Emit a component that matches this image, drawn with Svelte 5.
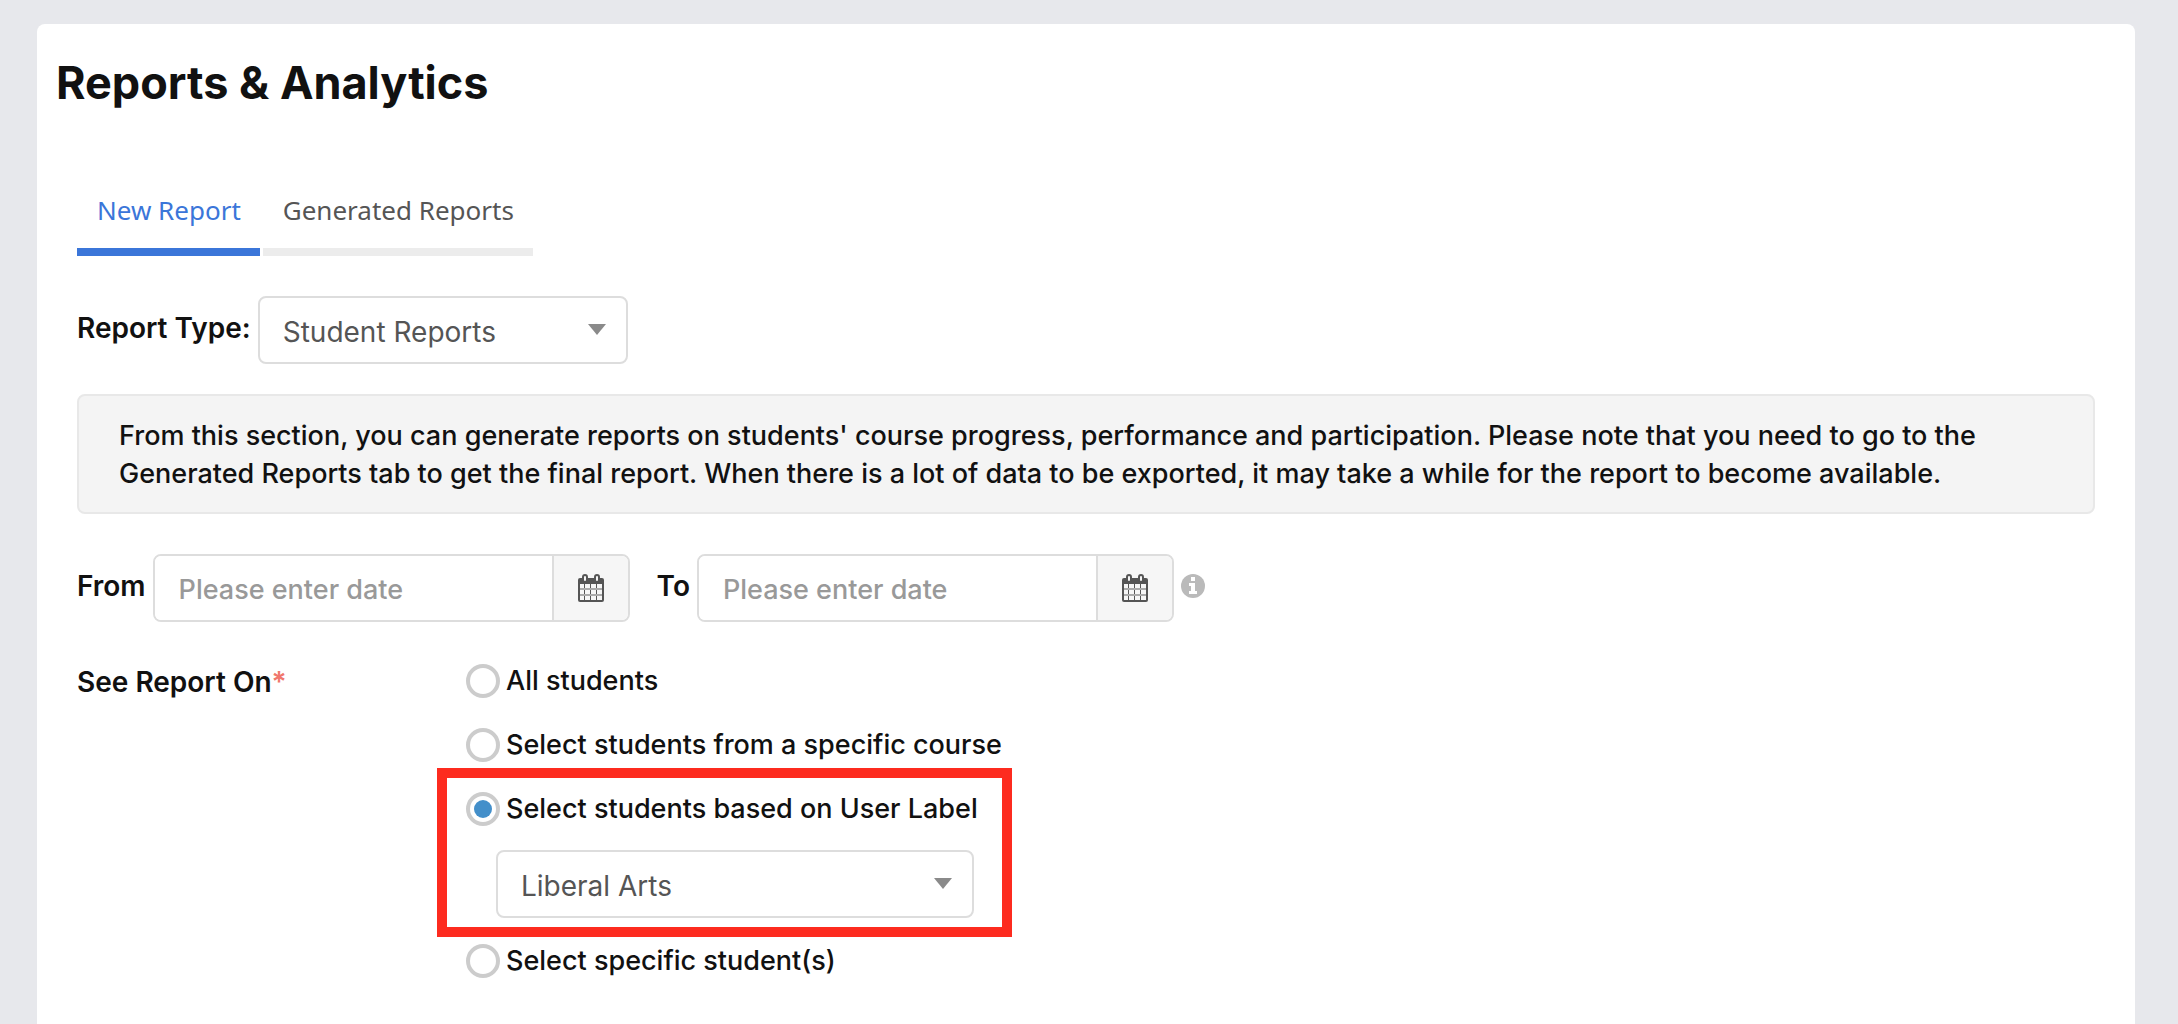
<script lang="ts">
  type Tab = 'new' | 'generated';

  let activeTab = $state<Tab>('new');
  let reportType = $state('Student Reports');
  let fromDate = $state('');
  let toDate = $state('');
  let reportOn = $state('label');
  let userLabel = $state('Liberal Arts');
</script>

{#snippet arrow()}
  <svg class="arrow" viewBox="0 0 18 11" aria-hidden="true"><path d="M0 0h18l-9 11z" /></svg>
{/snippet}

{#snippet calendar()}
  <svg class="calendar" viewBox="0 0 26 28" aria-hidden="true">
    <path class="fill" d="M2 4h22a2 2 0 0 1 2 2v20a2 2 0 0 1-2 2H2a2 2 0 0 1-2-2V6a2 2 0 0 1 2-2z" />
    <path
      class="cells"
      d="M2 10h4v16H2zM7 10h5v16H7zM13 10h5v16h-5zM19 10h5v16h-5z"
    />
    <path class="rows" d="M2 15h22M2 21h22" />
    <rect class="ring" x="5" y="1" width="4" height="7" rx="2" />
    <rect class="ring" x="17" y="1" width="4" height="7" rx="2" />
  </svg>
{/snippet}

{#snippet option(value: string, text: string)}
  <label class="option">
    <input type="radio" name="report-on" {value} bind:group={reportOn} />
    {text}
  </label>
{/snippet}

<div class="page">
  <main>
    <h1>Reports &amp; Analytics</h1>

    <div class="content">
      <nav class="tabs">
        <button class:active={activeTab === 'new'} onclick={() => (activeTab = 'new')}>New Report</button>
        <button class:active={activeTab === 'generated'} onclick={() => (activeTab = 'generated')}>
          Generated Reports
        </button>
      </nav>

      <div class="field">
        <label class="name" for="report-type">Report Type:</label>
        <div class="select type">
          <select id="report-type" bind:value={reportType}>
            <option>Student Reports</option>
            <option>Course Reports</option>
          </select>
          {@render arrow()}
        </div>
      </div>

      <p class="notice">
        From this section, you can generate reports on students' course progress, performance and participation. Please note that you need to go to the<br />
        Generated Reports tab to get the final report. When there is a lot of data to be exported, it may take a while for the report to become available.
      </p>

      <div class="field">
        <label class="name" for="from-date">From</label>
        <div class="date">
          <input id="from-date" type="text" placeholder="Please enter date" bind:value={fromDate} />
          <button aria-label="Pick start date">{@render calendar()}</button>
        </div>
        <label class="name to" for="to-date">To</label>
        <div class="date">
          <input id="to-date" type="text" placeholder="Please enter date" bind:value={toDate} />
          <button aria-label="Pick end date">{@render calendar()}</button>
        </div>
        <svg class="info" viewBox="0 0 24 24" aria-hidden="true">
          <circle cx="12" cy="12" r="12" />
          <path d="M10 3h4v4h-4zM8 9h6v8h2v3H8v-3h2v-5H8z" />
        </svg>
      </div>

      <div class="report-on" role="radiogroup" aria-labelledby="report-on-name">
        <div class="name" id="report-on-name">See Report On<span class="required">*</span></div>
        <div class="options">
          {@render option('all', 'All students')}
          {@render option('course', 'Select students from a specific course')}
          <div class="highlight">
            {@render option('label', 'Select students based on User Label')}
            <div class="select user-label">
              <select aria-label="User Label" bind:value={userLabel}>
                <option>Liberal Arts</option>
                <option>Science</option>
              </select>
              {@render arrow()}
            </div>
          </div>
          {@render option('specific', 'Select specific student(s)')}
        </div>
      </div>
    </div>
  </main>
</div>

<style>
  :global(body) {
    margin: 0;
    background: #e7e8ec;
  }

  .page {
    padding: 24px 43px 0 37px;
    color: #111;
    font-family: Inter, 'Liberation Sans', sans-serif;
    font-size: 27px;
    font-weight: 500;
    line-height: 38px;
  }

  main {
    box-sizing: border-box;
    min-height: calc(100vh - 24px);
    padding: 27px 20px 0 19px;
    border-radius: 8px 8px 0 0;
    background: #fff;
  }

  h1 {
    margin: 0;
    font-size: 45px;
    font-weight: 700;
    line-height: 64px;
  }

  .content {
    padding: 65px 20px 0 21px;
  }

  button,
  input,
  select {
    font: inherit;
  }

  .tabs {
    display: flex;
    gap: 3px;
    margin-bottom: 40px;
  }

  .tabs button {
    padding: 11px 19px 19px 20px;
    border: 0;
    border-bottom: 8px solid #ececec;
    background: none;
    color: #555;
    font-family: 'Noto Sans', sans-serif;
    font-size: 26px;
    font-weight: 400;
    cursor: pointer;
  }

  .tabs .active {
    border-color: #3b76d9;
    color: #3b76d9;
  }

  .field {
    display: flex;
    align-items: center;
  }

  .name {
    font-size: 28px;
    font-weight: 600;
  }

  .field .name {
    margin-right: 7px;
    padding-bottom: 4px;
  }

  .field .to {
    margin-left: 27px;
  }

  .select {
    position: relative;
  }

  .type {
    width: 370px;
  }

  select {
    box-sizing: border-box;
    width: 100%;
    height: 68px;
    padding: 4px 50px 0 23px;
    border: 2px solid #ddd;
    border-radius: 8px;
    background: #fff;
    color: #555;
    font-size: 28px;
    font-weight: 400;
    appearance: none;
  }

  .arrow {
    position: absolute;
    top: 28px;
    right: 22px;
    width: 18px;
    height: 11px;
    fill: #8a8a8a;
    pointer-events: none;
  }

  .notice {
    margin: 30px 0 40px;
    padding: 21px 40px 19px;
    border: 2px solid #e8e8e8;
    border-radius: 8px;
    background: #f4f4f4;
  }

  .date {
    display: flex;
    box-sizing: border-box;
    width: 477px;
    height: 68px;
    border: 2px solid #ddd;
    border-radius: 8px;
    overflow: hidden;
  }

  .date input {
    flex: 1;
    min-width: 0;
    padding: 4px 24px 0;
    border: 0;
  }

  .date input::placeholder {
    color: #999;
    opacity: 1;
  }

  .date button {
    display: flex;
    align-items: center;
    justify-content: center;
    width: 76px;
    padding: 0;
    border: 0;
    border-left: 2px solid #ddd;
    background: #f6f6f6;
  }

  .calendar {
    width: 26px;
    height: 28px;
  }

  .fill {
    fill: #555;
  }

  .cells {
    fill: #f6f6f6;
  }

  .rows {
    stroke: #aaa;
    stroke-width: 2;
  }

  .ring {
    fill: #f6f6f6;
    stroke: #555;
    stroke-width: 2;
  }

  .info {
    width: 24px;
    height: 24px;
    margin: 0 0 4px 7px;
    fill: #bababa;
  }

  .info path {
    fill: #fff;
  }

  .report-on {
    display: flex;
    margin-top: 40px;
  }

  .report-on .name {
    width: 389px;
    padding-top: 1px;
  }

  .required {
    color: #f0776c;
  }

  .option {
    display: flex;
    align-items: center;
    gap: 6px;
    width: fit-content;
    height: 38px;
    margin-bottom: 26px;
    white-space: nowrap;
  }

  .option input {
    display: grid;
    place-items: center;
    box-sizing: border-box;
    width: 34px;
    height: 34px;
    margin: 0;
    border: 4px solid #ccc;
    border-radius: 50%;
    appearance: none;
  }

  .option input:checked::before {
    width: 18px;
    height: 18px;
    border-radius: 50%;
    background: #438fca;
    content: '';
  }

  .highlight {
    box-sizing: border-box;
    width: 575px;
    margin: -22px 0 5px -29px;
    padding: 12px 28px 9px 19px;
    border: 10px solid #fd2b1f;
  }

  .highlight .option {
    margin-bottom: 22px;
  }

  .user-label {
    margin-left: 30px;
  }
</style>
